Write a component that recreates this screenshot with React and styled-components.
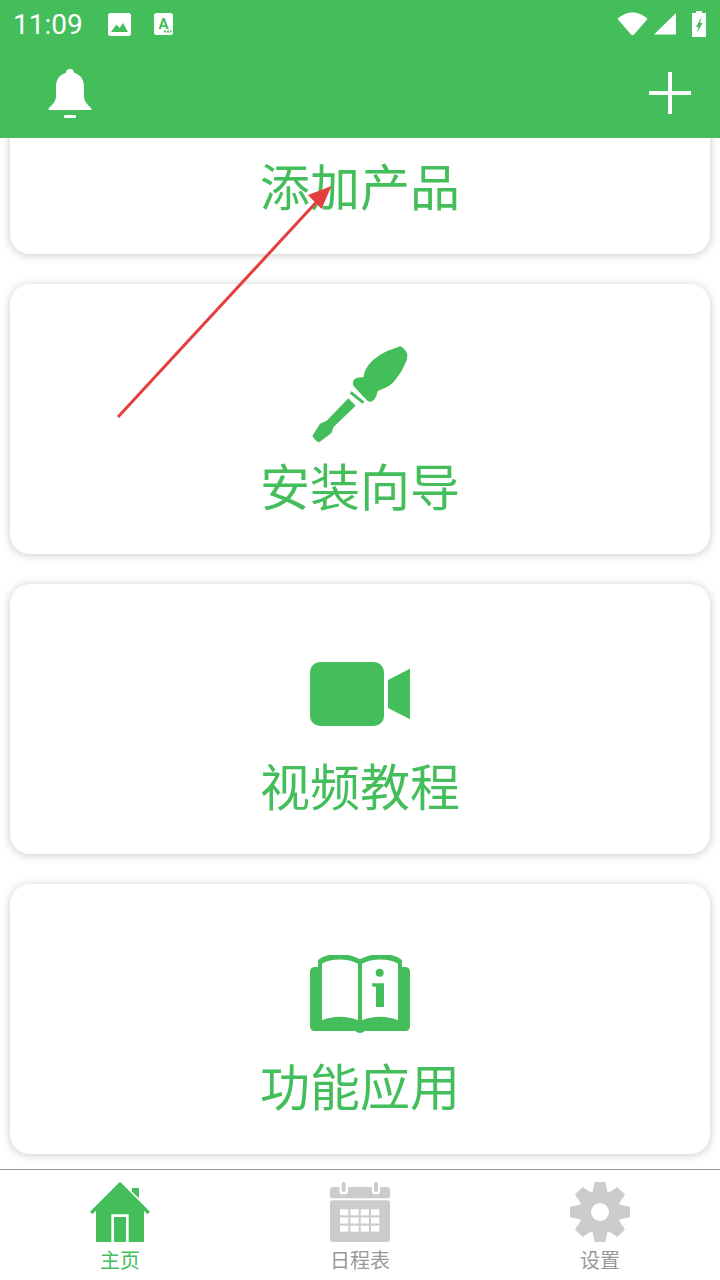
import styled, { createGlobalStyle } from "styled-components";

const GREEN = "#43be5a";
const GREY = "#cccccc";

const GlobalStyle = createGlobalStyle`
  html, body {
    margin: 0;
    padding: 0;
    background: #fff;
  }
  * {
    box-sizing: border-box;
  }
`;

const Page = styled.div`
  position: relative;
  width: 720px;
  height: 1280px;
  display: flex;
  flex-direction: column;
  overflow: hidden;
  font-family: "Noto Sans CJK SC", "Noto Sans", sans-serif;
`;

const Header = styled.header`
  position: relative;
  z-index: 2;
  flex: none;
  height: 138px;
  background: ${GREEN};
  color: #fff;
`;

const StatusBar = styled.div`
  height: 48px;
  display: flex;
  align-items: center;
  padding: 0 14px 0 13px;
`;

const Clock = styled.span`
  font-family: Roboto, sans-serif;
  font-size: 28px;
  line-height: 48px;
  margin-top: 2px;
  width: 72px;
`;

const StatusLeft = styled.div`
  display: flex;
  align-items: center;
  gap: 23px;
  flex: 1;
`;

const StatusRight = styled.div`
  display: flex;
  align-items: center;
  gap: 6px;
`;

const BatteryWrap = styled.span`
  display: flex;
  margin-left: 10px;
`;

const Toolbar = styled.div`
  height: 90px;
  display: flex;
  align-items: flex-start;
  justify-content: space-between;
  padding: 21px 29px 0 48px;
`;

const PlusButton = styled.div`
  position: relative;
  width: 42px;
  height: 42px;
  margin-top: 3px;
  &::before,
  &::after {
    content: "";
    position: absolute;
    background: #fff;
  }
  &::before {
    left: 0;
    right: 0;
    top: 19px;
    height: 4px;
  }
  &::after {
    top: 0;
    bottom: 0;
    left: 19px;
    width: 4px;
  }
`;

const Main = styled.main`
  flex: 1;
  min-height: 0;
  overflow: hidden;
  padding: 0 10px;
  background: #fff;
`;

const CardList = styled.div`
  display: flex;
  flex-direction: column;
  gap: 30px;
  margin-top: -154px;
`;

const Card = styled.div`
  height: 270px;
  padding-top: 60px;
  display: flex;
  flex-direction: column;
  align-items: center;
  background: #fff;
  border-radius: 20px;
  box-shadow: 0 1px 10px rgba(0, 0, 0, 0.22);
`;

const IconSlot = styled.div`
  height: 100px;
  display: flex;
  align-items: center;
  justify-content: center;
  color: ${GREEN};
`;

const CardLabel = styled.div`
  margin-top: 10px;
  font-size: 50px;
  line-height: 60px;
  color: ${GREEN};
`;

const BottomNav = styled.nav`
  flex: none;
  height: 111px;
  display: flex;
  background: #fff;
  border-top: 1px solid #999;
`;

const NavItem = styled.div`
  flex: 1;
  display: flex;
  flex-direction: column;
  align-items: center;
  padding-top: 12px;
  color: ${({ $active }) => ($active ? GREEN : "#999")};
`;

const NavLabel = styled.span`
  margin-top: 6px;
  font-size: 20px;
  line-height: 24px;
`;

const ArrowOverlay = styled.svg`
  position: absolute;
  left: 0;
  top: 0;
  z-index: 3;
  pointer-events: none;
`;

const ImageIcon = () => (
  <svg width="23" height="23" viewBox="0 0 23 23">
    <rect width="23" height="23" rx="2.5" fill="#fff" />
    <path d="M3 19 L8.5 11.5 L11.5 15 L15 10 L20 19 Z" fill={GREEN} />
  </svg>
);

const LetterIcon = () => (
  <svg width="19" height="22" viewBox="0 0 19 22">
    <rect width="19" height="22" rx="2.5" fill="#fff" />
    <text
      x="9.5"
      y="15.5"
      textAnchor="middle"
      fontFamily="Roboto, sans-serif"
      fontWeight="700"
      fontSize="15"
      fill={GREEN}
    >
      A
    </text>
    <path d="M10 17.5h2v2h-2zM13 17.5h2v2h-2zM16 17.5h1.5v2H16z" fill={GREEN} />
  </svg>
);

const WifiIcon = () => (
  <svg width="31" height="24" viewBox="0 0 31 24">
    <path
      d="M0.5 7 C4.5 3 10 0.5 15.5 0.5 C21 0.5 26.5 3 30.5 7 L17 22.5 Q15.5 24 14 22.5 Z"
      fill="#fff"
    />
  </svg>
);

const SignalIcon = () => (
  <svg width="22" height="22" viewBox="0 0 22 22">
    <path d="M0 21.5 L22 0 V21.5 Z" fill="#fff" />
  </svg>
);

const BatteryIcon = () => (
  <svg width="14" height="26" viewBox="0 0 14 26">
    <path d="M4 0h6v2h4v24H0V2h4z" fill="#fff" />
    <path d="M9.5 6 L4 16 H6.5 L5 22 L10.5 12 H8 Z" fill={GREEN} />
  </svg>
);

const BellIcon = () => (
  <svg width="44" height="50" viewBox="0 0 44 50">
    <path
      d="M22 0 C19.5 0 18 1.5 18 3.8 C11 6 8 11 8 18 V27 C8 32 5 35 1 39 Q-0.5 41 1.5 41 H42.5 Q44.5 41 43 39 C39 35 36 32 36 27 V18 C36 11 33 6 26 3.8 C26 1.5 24.5 0 22 0 Z"
      fill="#fff"
    />
    <rect x="16" y="46" width="12" height="3" rx="1" fill="#fff" />
  </svg>
);

const ScrewdriverIcon = () => (
  <svg width="100" height="100" viewBox="60 40 300 300">
    <path
      d="M330 47 Q342 50 352 70 Q354 85 345 100 Q335 125 318 145 Q305 163 285 172 Q268 178 262 183 Q262 195 252 207 Q242 218 232 210 L194 170 Q184 158 192 147 Q200 139 220 140 Q224 115 240 98 Q262 75 290 62 Z"
      fill="currentColor"
    />
    <path d="M182 185 L220 216" stroke="currentColor" strokeWidth="9" />
    <path
      d="M175 203 L197 225 L130 290 L125 306 L88 335 Q80 335 67 316 L90 279 L110 270 Z"
      fill="currentColor"
    />
  </svg>
);

const VideoIcon = () => (
  <svg width="100" height="64" viewBox="60 66 300 192">
    <rect x="60" y="66" width="222" height="192" rx="30" fill="currentColor" />
    <path d="M294 120 L360 86 V238 L294 204 Z" fill="currentColor" />
  </svg>
);

const BookIcon = () => (
  <svg width="100" height="78" viewBox="60 42 300 234">
    <path
      d="M84 78 V58 C110 33 170 33 210 55 C250 33 310 33 336 58 V78 H345 Q360 78 360 93 V255 Q360 270 345 270 H225 Q210 282 195 270 H75 Q60 270 60 255 V93 Q60 78 75 78 Z"
      fill="currentColor"
    />
    <path d="M96 68 C125 50 175 52 204 68 V238 C175 224 125 224 96 238 Z" fill="#fff" />
    <path d="M216 68 C245 52 295 50 324 68 V238 C295 224 245 224 216 238 Z" fill="#fff" />
    <circle cx="269" cy="95" r="12" fill="currentColor" />
    <path d="M246 127 H282 V198 H258 V137 H250 Q246 137 246 132 Z" fill="currentColor" />
  </svg>
);

const HomeIcon = () => (
  <svg width="60" height="60" viewBox="90 51 180 180">
    <path
      d="M180 50 L270 140 L262 148 L252 137 V231 H206 V148 H154 V231 H108 V137 L97 148 L90 140 Z"
      fill="currentColor"
    />
    <path d="M216 69 H237 V100 L216 80 Z" fill="currentColor" />
    <rect x="162" y="156" width="36" height="75" fill="currentColor" />
  </svg>
);

const calendarCells = [0, 1, 2].flatMap((row) =>
  [0, 1, 2, 3].map((col) => ({ x: 120 + col * 31, y: 133 + row * 24.5 }))
);

const CalendarIcon = () => (
  <svg width="60" height="60" viewBox="90 51 180 180">
    <path d="M90 100 V74 Q90 66 98 66 H262 Q270 66 270 74 V100 Z" fill={GREY} />
    <rect x="90" y="106" width="180" height="125" rx="8" fill={GREY} />
    <path d="M118 60 V80 Q118 88 131 88 Q144 88 144 80 V60 Z" fill="#fff" />
    <path d="M216 60 V80 Q216 88 228 88 Q240 88 240 80 V60 Z" fill="#fff" />
    <rect x="125" y="51" width="12" height="30" rx="6" fill={GREY} />
    <rect x="222" y="51" width="12" height="30" rx="6" fill={GREY} />
    {calendarCells.map((c) => (
      <rect key={`${c.x}-${c.y}`} x={c.x} y={c.y} width="25" height="18" fill="#fff" />
    ))}
  </svg>
);

const GearIcon = () => (
  <svg width="60" height="60" viewBox="90 51 180 180">
    <circle cx="180" cy="141" r="64" fill={GREY} />
    {[0, 45, 90, 135, 180, 225, 270, 315].map((deg) => (
      <path
        key={deg}
        d="M164 51 H196 L204 90 H156 Z"
        fill={GREY}
        transform={`rotate(${deg} 180 141)`}
      />
    ))}
    <circle cx="180" cy="141" r="27" fill="#fff" />
  </svg>
);

const cards = [
  { label: "添加产品", icon: null },
  { label: "安装向导", icon: <ScrewdriverIcon /> },
  { label: "视频教程", icon: <VideoIcon /> },
  { label: "功能应用", icon: <BookIcon /> },
];

const tabs = [
  { label: "主页", icon: <HomeIcon />, active: true },
  { label: "日程表", icon: <CalendarIcon /> },
  { label: "设置", icon: <GearIcon /> },
];

export default function App() {
  return (
    <Page>
      <GlobalStyle />
      <Header>
        <StatusBar>
          <StatusLeft>
            <Clock>11:09</Clock>
            <ImageIcon />
            <LetterIcon />
          </StatusLeft>
          <StatusRight>
            <WifiIcon />
            <SignalIcon />
            <BatteryWrap>
              <BatteryIcon />
            </BatteryWrap>
          </StatusRight>
        </StatusBar>
        <Toolbar>
          <BellIcon />
          <PlusButton />
        </Toolbar>
      </Header>

      <Main>
        <CardList>
          {cards.map((card) => (
            <Card key={card.label}>
              <IconSlot>{card.icon}</IconSlot>
              <CardLabel>{card.label}</CardLabel>
            </Card>
          ))}
        </CardList>
      </Main>

      <BottomNav>
        {tabs.map((tab) => (
          <NavItem key={tab.label} $active={tab.active}>
            {tab.icon}
            <NavLabel>{tab.label}</NavLabel>
          </NavItem>
        ))}
      </BottomNav>

      <ArrowOverlay width="720" height="1280" viewBox="0 0 720 1280">
        <line x1="118" y1="417" x2="322" y2="196" stroke="#e53e3e" strokeWidth="3" />
        <path d="M331.5 186 L308 195 L321.5 209 Z" fill="#e53e3e" />
      </ArrowOverlay>
    </Page>
  );
}
